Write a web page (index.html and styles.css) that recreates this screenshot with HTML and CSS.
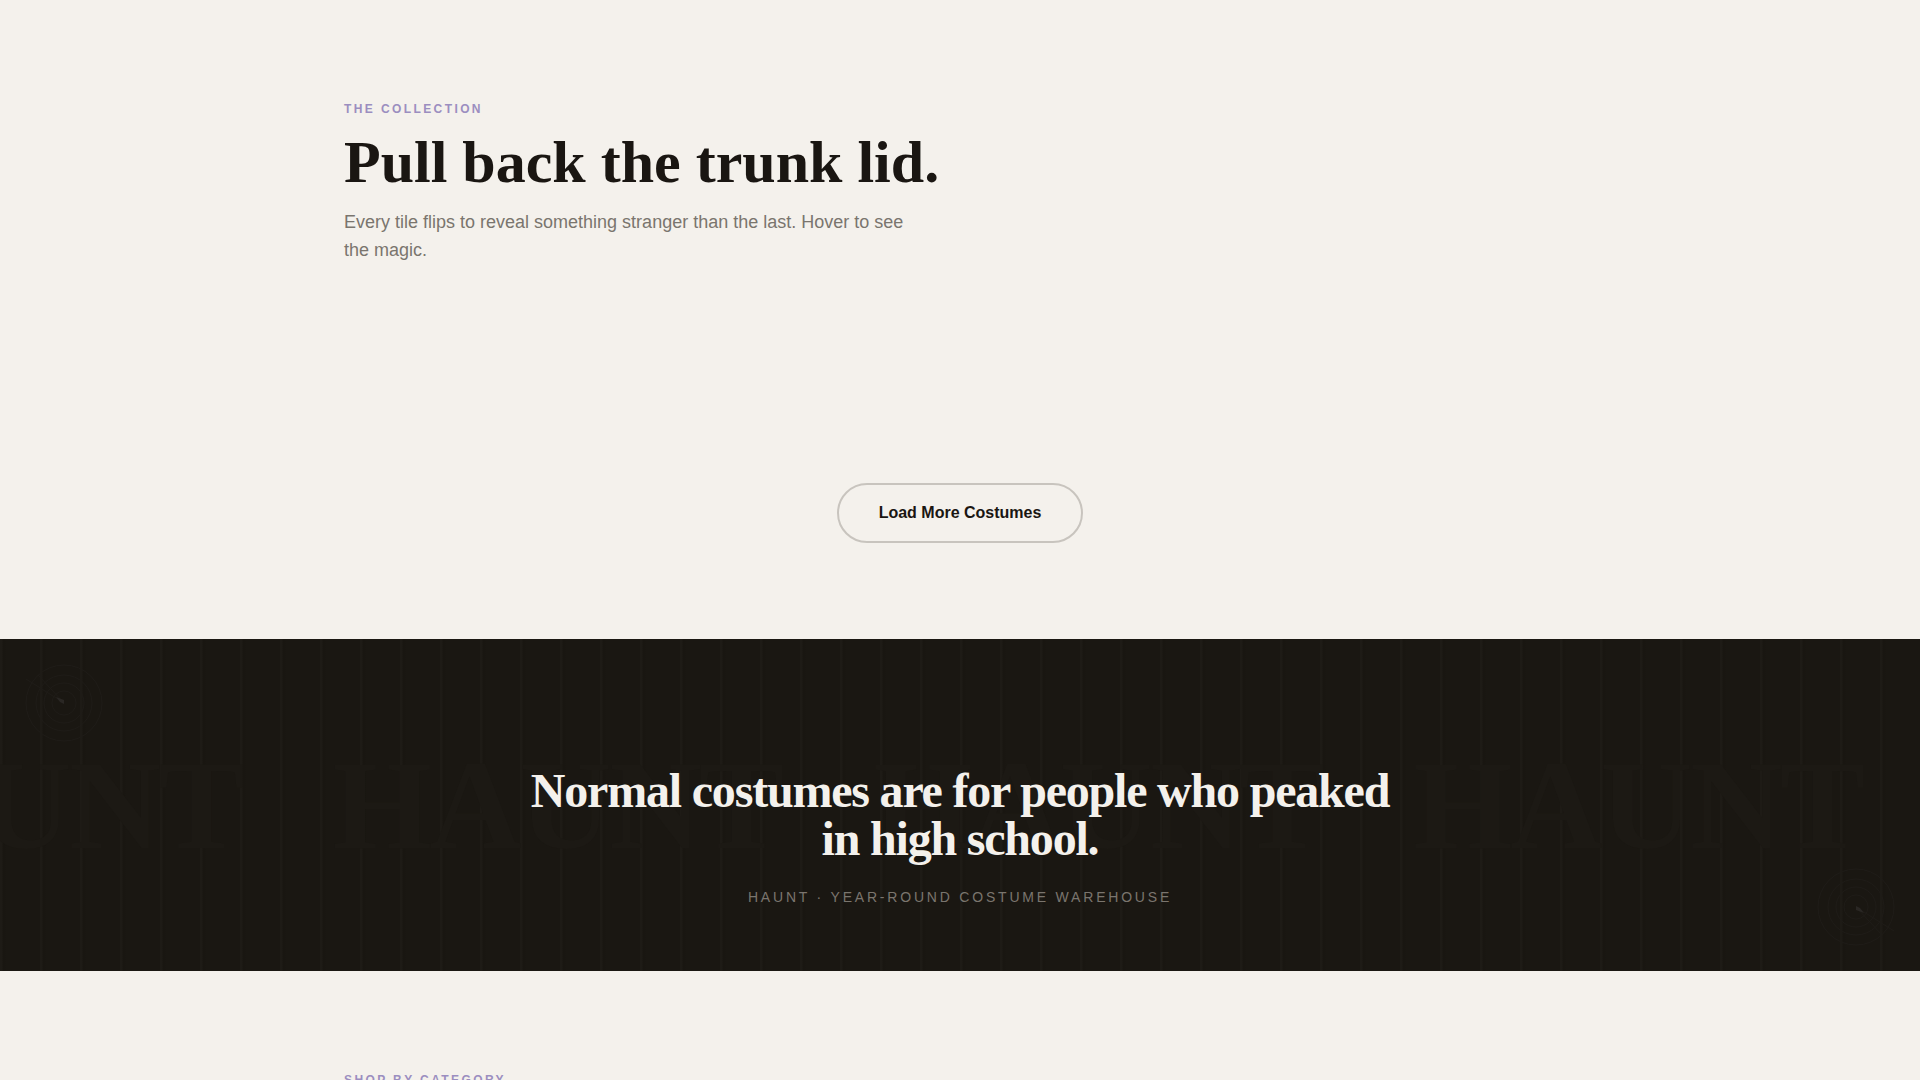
FILE: index.html
```html
<!DOCTYPE html>
<html lang="en">
<head>
<meta charset="UTF-8">
<meta name="viewport" content="width=device-width, initial-scale=1.0">
<title>HAUNT | Year-Round Costume Warehouse</title>
<link rel="stylesheet" href="styles.css">
</head>
<body>

  <!-- Collection -->
  <section class="collection">
    <div class="container">
      <header class="section-header">
        <p class="eyebrow">The Collection</p>
        <h2>Pull back the trunk lid.</h2>
        <p class="section-sub">Every tile flips to reveal something stranger than the last. Hover to see the magic.</p>
      </header>
      <div class="costume-grid"></div>
      <div class="load-more">
        <button type="button" class="btn-outline">Load More Costumes</button>
      </div>
    </div>
  </section>

  <!-- Quote band -->
  <section class="quote-band">
    <div class="watermark" aria-hidden="true">
      <span>HAUNT</span><span>HAUNT</span><span>HAUNT</span><span>HAUNT</span>
    </div>

    <svg class="web web-left" viewBox="0 0 80 80" aria-hidden="true">
      <g class="web-lines">
        <circle cx="40" cy="40" r="12"/>
        <circle cx="40" cy="40" r="20"/>
        <circle cx="40" cy="40" r="28"/>
        <circle cx="40" cy="40" r="38"/>
        <path d="M40 40 L2 16 M40 40 L14 12"/>
      </g>
      <path class="web-glint" d="M32 34 L40 37 L40 41 L36 39 Z"/>
    </svg>
    <svg class="web web-right" viewBox="0 0 80 80" aria-hidden="true">
      <g class="web-lines">
        <circle cx="40" cy="40" r="12"/>
        <circle cx="40" cy="40" r="20"/>
        <circle cx="40" cy="40" r="28"/>
        <circle cx="40" cy="40" r="38"/>
        <path d="M40 40 L2 16 M40 40 L14 12"/>
      </g>
      <path class="web-glint" d="M32 34 L40 37 L40 41 L36 39 Z"/>
    </svg>

    <div class="quote">
      <blockquote>Normal costumes are for people who peaked in high school.</blockquote>
      <p class="quote-source">HAUNT · Year-Round Costume Warehouse</p>
    </div>
  </section>

  <!-- Categories -->
  <section class="categories">
    <div class="container">
      <p class="eyebrow">Shop by Category</p>
    </div>
  </section>

</body>
</html>
```
FILE: styles.css
```css
* {
  box-sizing: border-box;
  margin: 0;
  padding: 0;
}

html {
  overflow-x: hidden;
  scrollbar-width: none;
}

body {
  background: #f4f1ec;
  color: #1a1612;
  font-family: "Liberation Sans", Arial, sans-serif;
  font-size: 16px;
  line-height: 24px;
}

.container {
  max-width: 1280px;
  margin: 0 auto;
  padding: 0 24px;
}

.collection,
.categories {
  padding: 96px 0;
}

.section-header {
  max-width: 608px;
}

.eyebrow {
  color: #9b8ec0;
  font-size: 12px;
  font-weight: 700;
  line-height: 26px;
  letter-spacing: 0.2em;
  text-transform: uppercase;
}

h2 {
  margin-top: 6px;
  font-family: "Liberation Serif", "Times New Roman", serif;
  font-size: 60px;
  line-height: 68px;
}

.section-sub {
  max-width: 576px;
  margin-top: 12px;
  color: #7a756e;
  font-size: 18px;
  line-height: 28px;
}

.costume-grid {
  min-height: 155px;
  margin-top: 64px;
}

.load-more {
  text-align: center;
}

.btn-outline {
  padding: 16px 40px;
  border: 2px solid #c8c4be;
  border-radius: 32px;
  background: transparent;
  color: #1a1612;
  font: 700 16px/24px "Liberation Sans", Arial, sans-serif;
  cursor: pointer;
}

.quote-band {
  position: relative;
  overflow: hidden;
  padding: 128px 24px 62px;
  background: #1a1712;
}

/* curtain folds */
.quote-band::before {
  content: "";
  position: absolute;
  inset: 0;
  background: repeating-linear-gradient(90deg, #1e1b16 0, #1e1b16 2px, #191611 3px, #191611 5px, transparent 6px, transparent 40px);
}

.watermark {
  position: absolute;
  top: 50%;
  left: -208px;
  display: flex;
  gap: 91px;
  transform: translateY(-50%);
  color: #1c1914;
  font-family: "Liberation Serif", "Times New Roman", serif;
  font-size: 128px;
  font-weight: 700;
  line-height: 1;
  letter-spacing: -0.02em;
}

.web {
  position: absolute;
  width: 80px;
  height: 80px;
}

.web-left {
  top: 24px;
  left: 24px;
}

.web-right {
  right: 24px;
  bottom: 24px;
  transform: rotate(180deg);
}

.web-lines {
  fill: none;
  stroke: #1f1c18;
}

.web-glint {
  fill: #2a2724;
}

.quote {
  position: relative;
  max-width: 896px;
  margin: 0 auto;
  text-align: center;
}

blockquote {
  color: #f4f1ec;
  font-family: "Liberation Serif", "Times New Roman", serif;
  font-size: 48px;
  font-weight: 700;
  line-height: 48px;
  letter-spacing: -0.025em;
}

.quote-source {
  margin-top: 22px;
  color: #7a756e;
  font-size: 14px;
  line-height: 24px;
  letter-spacing: 0.2em;
  text-transform: uppercase;
}
```
